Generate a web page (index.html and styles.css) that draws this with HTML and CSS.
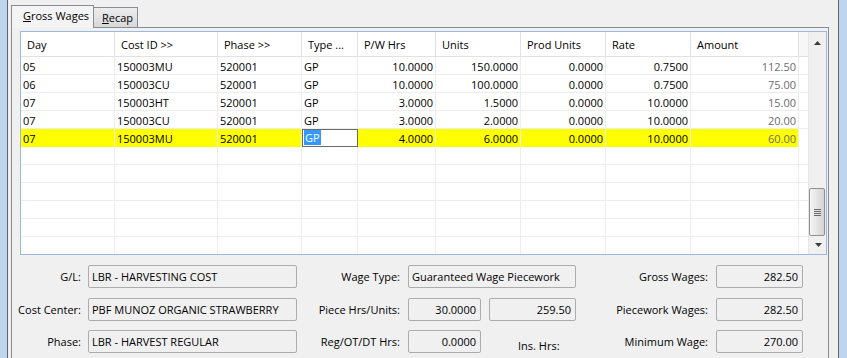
FILE: index.html
```html
<!DOCTYPE html>
<html>
<head>
<meta charset="utf-8">
<title>Gross Wages</title>
<link rel="stylesheet" href="styles.css">
</head>
<body>
<div class="window">
  <div class="frame-l"></div>
  <div class="client">
    <div class="tabs">
      <div class="tab tab-active"><u>G</u>ross Wages</div>
      <div class="tab tab-back"><u>R</u>ecap</div>
    </div>
    <div class="panel">
      <div class="grid">
        <div class="cols">
          <div class="row hdr">
            <div class="cell">Day</div>
            <div class="cell">Cost ID &gt;&gt;</div>
            <div class="cell">Phase &gt;&gt;</div>
            <div class="cell">Type ...</div>
            <div class="cell">P/W Hrs</div>
            <div class="cell">Units</div>
            <div class="cell">Prod Units</div>
            <div class="cell">Rate</div>
            <div class="cell">Amount</div>
            <div class="cell fill"></div>
          </div>
          <div class="row">
            <div class="cell">05</div><div class="cell">150003MU</div><div class="cell">520001</div><div class="cell">GP</div>
            <div class="cell r">10.0000</div><div class="cell r">150.0000</div><div class="cell r">0.0000</div><div class="cell r">0.7500</div><div class="cell r amt">112.50</div><div class="cell fill"></div>
          </div>
          <div class="row">
            <div class="cell">06</div><div class="cell">150003CU</div><div class="cell">520001</div><div class="cell">GP</div>
            <div class="cell r">10.0000</div><div class="cell r">100.0000</div><div class="cell r">0.0000</div><div class="cell r">0.7500</div><div class="cell r amt">75.00</div><div class="cell fill"></div>
          </div>
          <div class="row">
            <div class="cell">07</div><div class="cell">150003HT</div><div class="cell">520001</div><div class="cell">GP</div>
            <div class="cell r">3.0000</div><div class="cell r">1.5000</div><div class="cell r">0.0000</div><div class="cell r">10.0000</div><div class="cell r amt">15.00</div><div class="cell fill"></div>
          </div>
          <div class="row">
            <div class="cell">07</div><div class="cell">150003CU</div><div class="cell">520001</div><div class="cell">GP</div>
            <div class="cell r">3.0000</div><div class="cell r">2.0000</div><div class="cell r">0.0000</div><div class="cell r">10.0000</div><div class="cell r amt">20.00</div><div class="cell fill"></div>
          </div>
          <div class="row sel">
            <div class="cell">07</div><div class="cell">150003MU</div><div class="cell">520001</div><div class="cell edit"><span class="hl">GP</span></div>
            <div class="cell r">4.0000</div><div class="cell r">6.0000</div><div class="cell r">0.0000</div><div class="cell r">10.0000</div><div class="cell r amt">60.00</div><div class="cell fill"></div>
          </div>
          <div class="row empty"><div class="cell"></div><div class="cell"></div><div class="cell"></div><div class="cell"></div><div class="cell"></div><div class="cell"></div><div class="cell"></div><div class="cell"></div><div class="cell"></div><div class="cell fill"></div></div>
          <div class="row empty"><div class="cell"></div><div class="cell"></div><div class="cell"></div><div class="cell"></div><div class="cell"></div><div class="cell"></div><div class="cell"></div><div class="cell"></div><div class="cell"></div><div class="cell fill"></div></div>
          <div class="row empty"><div class="cell"></div><div class="cell"></div><div class="cell"></div><div class="cell"></div><div class="cell"></div><div class="cell"></div><div class="cell"></div><div class="cell"></div><div class="cell"></div><div class="cell fill"></div></div>
          <div class="row empty"><div class="cell"></div><div class="cell"></div><div class="cell"></div><div class="cell"></div><div class="cell"></div><div class="cell"></div><div class="cell"></div><div class="cell"></div><div class="cell"></div><div class="cell fill"></div></div>
          <div class="row empty"><div class="cell"></div><div class="cell"></div><div class="cell"></div><div class="cell"></div><div class="cell"></div><div class="cell"></div><div class="cell"></div><div class="cell"></div><div class="cell"></div><div class="cell fill"></div></div>
          <div class="row empty last"><div class="cell"></div><div class="cell"></div><div class="cell"></div><div class="cell"></div><div class="cell"></div><div class="cell"></div><div class="cell"></div><div class="cell"></div><div class="cell"></div><div class="cell fill"></div></div>
        </div>
        <div class="vscroll">
          <div class="sb-btn sb-up"><svg width="7" height="4" viewBox="0 0 7 4"><path d="M0 4 L3.5 0 L7 4 Z" fill="#3c3c3c"/></svg></div>
          <div class="sb-track"></div>
          <div class="sb-thumb"><svg width="7" height="7" viewBox="0 0 7 7"><path d="M0 0.5H7M0 2.5H7M0 4.5H7M0 6.5H7" stroke="#6a6a6a" stroke-width="1"/></svg></div>
          <div class="sb-btn sb-down"><svg width="7" height="4" viewBox="0 0 7 4"><path d="M0 0 L7 0 L3.5 4 Z" fill="#3c3c3c"/></svg></div>
        </div>
      </div>

      <div class="form">
        <div class="lbl">G/L:</div>
        <div class="fld">LBR - HARVESTING COST</div>
        <div class="lbl">Wage Type:</div>
        <div class="fld">Guaranteed Wage Piecework</div>
        <div class="lbl">Gross Wages:</div>
        <div class="fld r">282.50</div>

        <div class="lbl">Cost Center:</div>
        <div class="fld">PBF MUNOZ ORGANIC STRAWBERRY</div>
        <div class="lbl">Piece Hrs/Units:</div>
        <div class="pair">
          <div class="fld r small">30.0000</div>
          <div class="fld r wide">259.50</div>
        </div>
        <div class="lbl">Piecework Wages:</div>
        <div class="fld r">282.50</div>

        <div class="lbl">Phase:</div>
        <div class="fld">LBR - HARVEST REGULAR</div>
        <div class="lbl">Reg/OT/DT Hrs:</div>
        <div class="pair">
          <div class="fld r small">0.0000</div>
          <div class="ins">Ins. Hrs:</div>
        </div>
        <div class="lbl">Minimum Wage:</div>
        <div class="fld r">270.00</div>
      </div>
    </div>
  </div>
  <div class="frame-r"></div>
</div>
</body>
</html>
```

FILE: styles.css
```css
html, body {
  margin: 0;
  padding: 0;
}
body {
  width: 847px;
  height: 358px;
  overflow: hidden;
  background: #f0f0f0;
  font-family: "Open Sans", "Liberation Sans", sans-serif;
  font-size: 11px;
  color: #000;
}

.window {
  display: flex;
  height: 358px;
}
.frame-l {
  width: 7px;
  background: #bfd5ec;
  border-right: 1px solid #5a6472;
}
.frame-r {
  width: 8px;
  background: #bfd5ec;
  border-left: 1px solid #5a6472;
}
.client {
  flex: 1;
  min-width: 0;
  padding: 5px 0 0 3px;
  background: #f0f0f0;
}

/* tabs */
.tabs {
  display: flex;
  align-items: flex-end;
  height: 22px;
  position: relative;
  z-index: 1;
}
.tab {
  box-sizing: border-box;
  border: 1px solid #898c95;
  border-bottom: none;
  line-height: 19px;
  white-space: nowrap;
}
.tab-active {
  width: 83px;
  height: 23px;
  margin-bottom: -1px;
  padding-left: 11px;
  background: #f4f4f4;
  position: relative;
  z-index: 2;
}
.tab-back {
  width: 45px;
  height: 20px;
  margin-left: -1px;
  padding-left: 8px;
  background: linear-gradient(#ececec, #d8d8d8);
}

/* panel */
.panel {
  box-sizing: border-box;
  width: 818px;
  height: 331px;
  border: 1px solid #898c95;
  border-bottom: none;
  padding: 3px 1px 0 0;
  background: #f0f0f0;
}

/* grid */
.grid {
  display: flex;
  box-sizing: border-box;
  width: 807px;
  margin-left: 8px;
  border: 1px solid #9db9da;
  background: #fff;
}
.cols {
  width: 787px;
}
.row {
  display: grid;
  grid-template-columns: 94px 103px 84px 56px 78px 85px 85px 85px 108px 9px;
  box-sizing: border-box;
  height: 18px;
  border-bottom: 1px solid #ededed;
}
.row.last {
  border-bottom: none;
  height: 17px;
}
.cell {
  box-sizing: border-box;
  border-right: 1px solid #ededed;
  padding: 2px 2px 0 2px;
  line-height: 16px;
  white-space: nowrap;
  overflow: hidden;
}
.cell.r {
  text-align: right;
}
.cell.fill {
  border-right: none;
}
.cell.amt {
  color: #6d6d6d;
}
.hdr {
  height: 25px;
  border-bottom: 1px solid #e2e2e2;
  background: #fff;
}
.hdr .cell {
  padding: 2px 0 0 6px;
  line-height: 22px;
  border-right-color: #e2e2e2;
}
.hdr .cell.fill {
  background: #f7f7f7;
}
.sel .cell {
  background: #ffff00;
}
.sel .cell.fill {
  background: #fff;
}
.sel .cell.edit {
  height: 18px;
  background: #fff;
  border: 1px solid #6b6b6b;
  padding: 0 0 0 1px;
  line-height: 16px;
}
.hl {
  display: inline-block;
  background: #3399ff;
  color: #fff;
  padding: 0 1px;
  line-height: 15px;
}

/* scrollbar */
.vscroll {
  box-sizing: border-box;
  width: 18px;
  display: flex;
  flex-direction: column;
  background: #f0f0f0;
  border-left: 1px solid #e6e6e6;
}
.sb-btn {
  display: flex;
  align-items: center;
  justify-content: center;
}
.sb-up {
  height: 20px;
  padding-top: 1px;
  box-sizing: border-box;
}
.sb-down {
  height: 18px;
  padding-left: 1px;
}
.sb-track {
  flex: 1;
}
.sb-thumb {
  box-sizing: border-box;
  height: 48px;
  margin: 0 1px 0 0;
  border: 1px solid #8e8f8f;
  border-radius: 2px;
  background: linear-gradient(to right, #f4f4f4, #e6e6e6 45%, #d3d3d3);
  display: flex;
  align-items: center;
  justify-content: center;
}

/* form */
.form {
  display: grid;
  grid-template-columns: 76px 209px 111px 168px 140px 87px;
  grid-template-rows: 23px 23px 23px;
  row-gap: 9.5px;
  margin-top: 10px;
}
.lbl {
  display: flex;
  align-items: center;
  justify-content: flex-end;
  padding-right: 7px;
  white-space: nowrap;
}
.lbl:nth-child(6n+3),
.lbl:nth-child(6n+5) {
  padding-right: 8px;
}
.fld {
  box-sizing: border-box;
  height: 23px;
  border: 1px solid #acacac;
  border-radius: 2px;
  background: #f0f0f0;
  padding: 0 4px 0 3px;
  line-height: 21px;
  white-space: nowrap;
  overflow: hidden;
}
.fld.r {
  text-align: right;
}
.pair {
  display: flex;
  gap: 8px;
}
.fld.small {
  width: 73px;
}
.fld.wide {
  width: 87px;
}
.ins {
  margin-left: 29px;
  padding-top: 5px;
  line-height: 21px;
  white-space: nowrap;
}
```
